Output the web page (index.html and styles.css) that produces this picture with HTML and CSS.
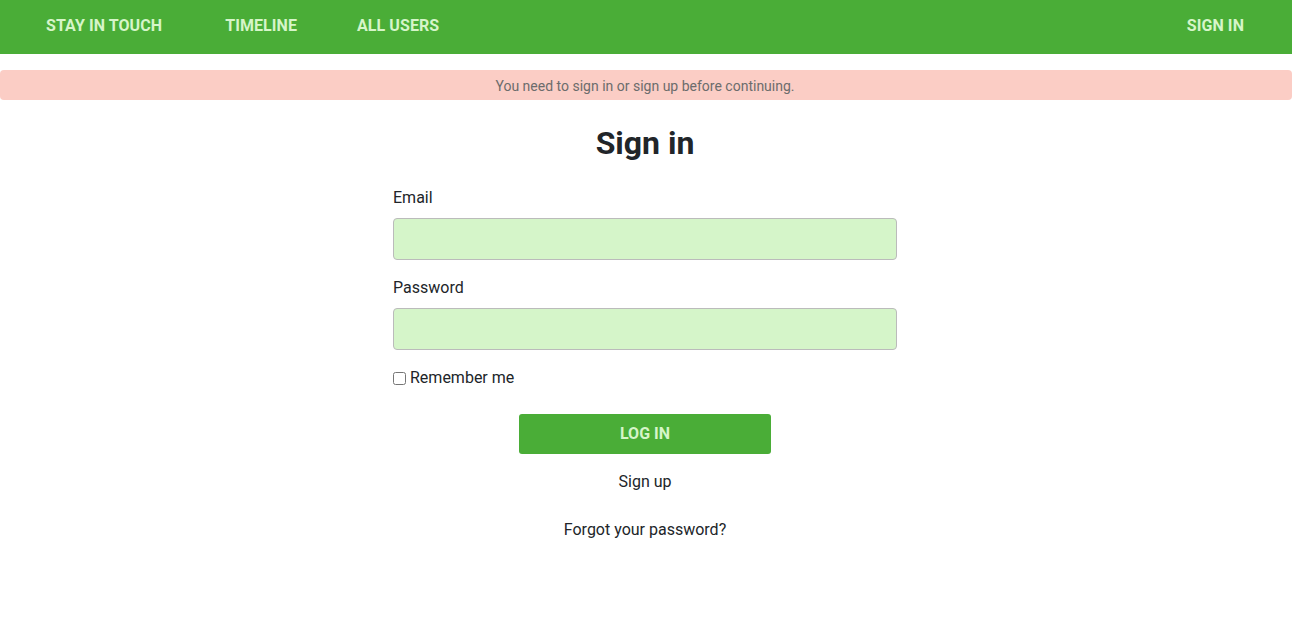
FILE: index.html
```html
<!DOCTYPE html>
<html>
<head>
<meta charset="utf-8">
<link rel="stylesheet" href="styles.css">
</head>
<body>
<nav class="navbar">
  <div class="nav-left">
    <a class="nav-link nav-first" href="#">Stay in touch</a>
    <a class="nav-link nav-second" href="#">Timeline</a>
    <a class="nav-link" href="#">All users</a>
  </div>
  <a class="nav-link" href="#">Sign in</a>
</nav>
<div class="flash">You need to sign in or sign up before continuing.</div>
<main class="content">
  <h2 class="title">Sign in</h2>
  <form class="form">
    <div class="field">
      <label class="label">Email</label>
      <input class="input" type="email">
    </div>
    <div class="field">
      <label class="label">Password</label>
      <input class="input" type="password">
    </div>
    <div class="check">
      <input type="checkbox" class="checkbox" id="rm">
      <label for="rm">Remember me</label>
    </div>
    <div class="actions">
      <button type="button" class="btn">Log in</button>
    </div>
  </form>
  <div class="links">
    <a href="#" class="link">Sign up</a>
    <a href="#" class="link">Forgot your password?</a>
  </div>
</main>
</body>
</html>
```
FILE: styles.css
```css
* { box-sizing: border-box; }
body {
  margin: 0;
  font-family: Roboto, "Liberation Sans", sans-serif;
  color: #212529;
  background: #fff;
}
.navbar {
  height: 54px;
  background: #4aad37;
  display: flex;
  align-items: center;
  justify-content: space-between;
  padding: 0 48px 0 46px;
}
.nav-left {
  display: flex;
}
.nav-first {
  margin-right: 63px;
}
.nav-second {
  margin-right: 60px;
}
.nav-link {
  color: #d6f5c9;
  font-weight: 700;
  font-size: 16px;
  text-transform: uppercase;
  text-decoration: none;
  line-height: 20px;
  letter-spacing: 0.08px;
  padding-bottom: 2px;
}
.flash {
  margin-top: 16px;
  height: 30px;
  line-height: 30px;
  background: #fbcdc5;
  color: #6c6c6c;
  font-size: 14px;
  text-align: center;
  border-radius: 4px;
  padding: 1px 2px 0 0;
}
.content {
  width: 506px;
  padding-right: 2px;
  margin: 0 auto;
  display: flex;
  flex-direction: column;
}
.title {
  margin: 24px 0 0;
  font-size: 32px;
  font-weight: 700;
  line-height: 38px;
  text-align: center;
  color: #212529;
}
.form {
  margin-top: 24px;
  display: flex;
  flex-direction: column;
}
.field {
  display: flex;
  flex-direction: column;
  margin-bottom: 16px;
}
.label {
  font-size: 16px;
  line-height: 24px;
  margin-bottom: 8px;
  color: #212529;
}
.input {
  height: 42px;
  background: #d5f5c9;
  border: 1px solid #bbbbbb;
  border-radius: 4px;
  width: 100%;
}
.check {
  display: flex;
  align-items: center;
  font-size: 16px;
  line-height: 24px;
}
.checkbox {
  margin: 0 4px 0 0;
  width: 13px;
  height: 13px;
}
.actions {
  display: flex;
  justify-content: center;
  margin-top: 24px;
}
.btn {
  width: 252px;
  height: 40px;
  background: #4aad37;
  color: #d6f5c9;
  border: none;
  border-radius: 3px;
  font-family: Roboto, "Liberation Sans", sans-serif;
  font-weight: 700;
  font-size: 16px;
  text-transform: uppercase;
  padding: 0 0 2px;
}
.links {
  display: flex;
  flex-direction: column;
  align-items: center;
  gap: 24px;
  margin-top: 16px;
}
.link {
  color: #212529;
  text-decoration: none;
  font-size: 16px;
  line-height: 24px;
}
```
